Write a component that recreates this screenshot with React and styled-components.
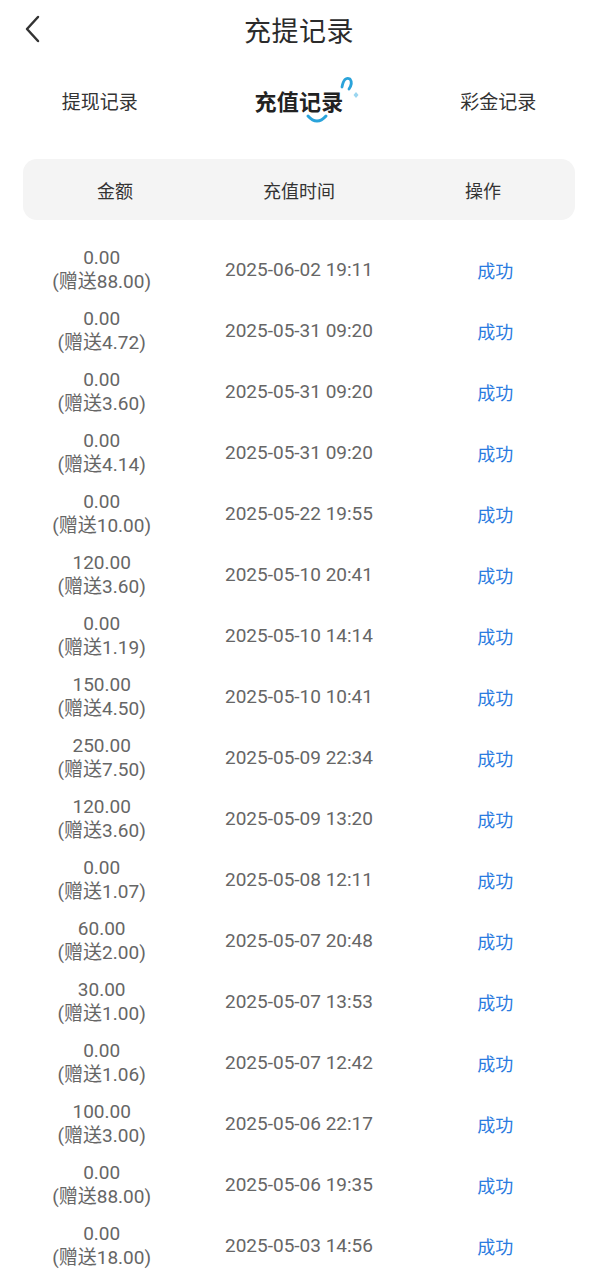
import React from "react";
import styled, { createGlobalStyle } from "styled-components";

const GlobalStyle = createGlobalStyle`
  html, body { margin: 0; padding: 0; background: #ffffff; }
  body {
    font-family: Roboto, "Noto Sans CJK SC", "Noto Sans", sans-serif;
    -webkit-font-smoothing: antialiased;
  }
`;

const Page = styled.div`
  width: 598px;
  min-height: 1280px;
  background: #fff;
  display: flex;
  flex-direction: column;
`;

const NavBar = styled.header`
  height: 58px;
  display: grid;
  grid-template-columns: 70px 1fr 70px;
  align-items: center;
`;

const BackButton = styled.button`
  border: 0;
  background: none;
  padding: 0 0 0 24px;
  height: 58px;
  display: flex;
  align-items: center;
  cursor: pointer;
`;

const Title = styled.h1`
  margin: 0;
  text-align: center;
  font-size: 27px;
  font-weight: 400;
  color: #2b2b2b;
  letter-spacing: 0.5px;
`;

const Tabs = styled.nav`
  height: 90px;
  display: grid;
  grid-template-columns: repeat(3, 1fr);
  align-items: center;
`;

const Tab = styled.div`
  display: flex;
  justify-content: center;
`;

const TabLabel = styled.span`
  position: relative;
  line-height: 26px;
  font-size: ${(p) => (p.$active ? "22px" : "19px")};
  font-weight: ${(p) => (p.$active ? 600 : 400)};
  color: ${(p) => (p.$active ? "#222" : "#333")};
  letter-spacing: ${(p) => (p.$active ? "0.3px" : "0")};
`;

const Decor = styled.svg`
  position: absolute;
  left: 0;
  top: -20px;
  width: 110px;
  height: 60px;
  pointer-events: none;
`;

const HeaderCard = styled.div`
  margin: 11px 23px 0;
  height: 61px;
  border-radius: 14px;
  background: #f4f4f4;
  display: grid;
  grid-template-columns: repeat(3, 1fr);
  align-items: center;
`;

const HeadCell = styled.div`
  text-align: center;
  font-size: 18px;
  color: #333;
`;

const List = styled.div`
  margin-top: 19px;
  display: flex;
  flex-direction: column;
`;

const Row = styled.div`
  height: 61px;
  display: grid;
  grid-template-columns: repeat(3, 1fr);
  align-items: center;
`;

const Amount = styled.div`
  text-align: center;
  font-size: 19px;
  line-height: 24px;
  color: #666;
  padding-left: 4px;
`;

const Time = styled.div`
  text-align: center;
  font-size: 19px;
  color: #666;
`;

const Status = styled.div`
  text-align: center;
  font-size: 18px;
  color: #2b7be0;
  padding-right: 6px;
`;

const records = [
  ["0.00", "88.00", "2025-06-02 19:11"],
  ["0.00", "4.72", "2025-05-31 09:20"],
  ["0.00", "3.60", "2025-05-31 09:20"],
  ["0.00", "4.14", "2025-05-31 09:20"],
  ["0.00", "10.00", "2025-05-22 19:55"],
  ["120.00", "3.60", "2025-05-10 20:41"],
  ["0.00", "1.19", "2025-05-10 14:14"],
  ["150.00", "4.50", "2025-05-10 10:41"],
  ["250.00", "7.50", "2025-05-09 22:34"],
  ["120.00", "3.60", "2025-05-09 13:20"],
  ["0.00", "1.07", "2025-05-08 12:11"],
  ["60.00", "2.00", "2025-05-07 20:48"],
  ["30.00", "1.00", "2025-05-07 13:53"],
  ["0.00", "1.06", "2025-05-07 12:42"],
  ["100.00", "3.00", "2025-05-06 22:17"],
  ["0.00", "88.00", "2025-05-06 19:35"],
  ["0.00", "18.00", "2025-05-03 14:56"],
];

export default function App() {
  return (
    <Page>
      <GlobalStyle />
      <NavBar>
        <BackButton aria-label="返回">
          <svg width="16" height="28" viewBox="0 0 16 28">
            <path d="M14 2 L3 14 L14 26" fill="none" stroke="#333" strokeWidth="2.5" strokeLinecap="round" strokeLinejoin="round" />
          </svg>
        </BackButton>
        <Title>充提记录</Title>
        <div />
      </NavBar>
      <Tabs>
        <Tab><TabLabel>提现记录</TabLabel></Tab>
        <Tab>
          <TabLabel $active>
            充值记录
            <Decor viewBox="0 0 110 60">
              <path d="M88 17 Q90 6 96 9 Q99 13 95 19" fill="none" stroke="#2aa3da" strokeWidth="2.8" strokeLinecap="round" />
              <path d="M102 22 L104.5 25 L102 28 L99.5 25 Z" fill="#9bd6f0" />
              <path d="M54 46 Q63 56 72 46" fill="none" stroke="#2aa3da" strokeWidth="3" strokeLinecap="round" />
            </Decor>
          </TabLabel>
        </Tab>
        <Tab><TabLabel>彩金记录</TabLabel></Tab>
      </Tabs>
      <HeaderCard>
        <HeadCell>金额</HeadCell>
        <HeadCell>充值时间</HeadCell>
        <HeadCell>操作</HeadCell>
      </HeaderCard>
      <List>
        {records.map(([amt, gift, time], i) => (
          <Row key={i}>
            <Amount>
              {amt}
              <br />
              (赠送{gift})
            </Amount>
            <Time>{time}</Time>
            <Status>成功</Status>
          </Row>
        ))}
      </List>
    </Page>
  );
}
